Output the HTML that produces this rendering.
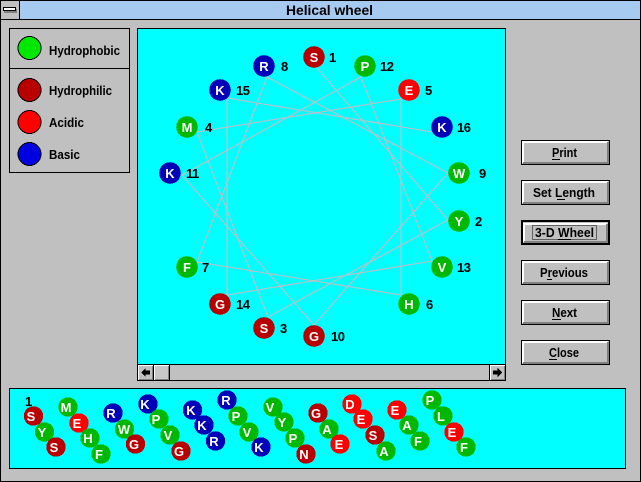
<!DOCTYPE html>
<html><head><meta charset="utf-8"><title>Helical wheel</title>
<style>
html,body{margin:0;padding:0;background:#c0c0c0;overflow:hidden}
svg{display:block}
text{font-family:"Liberation Sans",sans-serif;font-weight:bold}
rect,path,polyline,circle{shape-rendering:crispEdges}
.a text{fill:#fff;font-size:13px;text-anchor:middle}
.n text{fill:#000;font-size:13px;letter-spacing:-0.5px}
.l text{fill:#000;font-size:13px}
.b text{fill:#000;font-size:13px}
.g{fill:#00b800}.d{fill:#b80000}.r{fill:#ff0000}.u{fill:#0000b8}
</style></head><body>
<svg width="641" height="482" viewBox="0 0 641 482" xmlns="http://www.w3.org/2000/svg">
<rect width="641" height="482" fill="#c0c0c0"/>
<rect x="0.5" y="0.5" width="640" height="481" fill="none" stroke="#000"/>
<rect x="20" y="1" width="620" height="18" fill="#a6caf0"/>
<rect x="0" y="19" width="641" height="1" fill="#000"/>
<rect x="19" y="0" width="1" height="19" fill="#000"/>
<rect x="4" y="9" width="13" height="4" fill="#808080"/>
<rect x="3.5" y="7.5" width="12" height="3" fill="#fff" stroke="#000"/>
<text x="286" y="15" font-size="14" textLength="87" lengthAdjust="spacingAndGlyphs">Helical wheel</text>

<!-- legend -->
<rect x="9.5" y="28.5" width="120" height="144" fill="#c0c0c0" stroke="#000"/>
<rect x="9" y="68" width="121" height="1" fill="#000"/>
<g stroke="#000">
<circle cx="29.5" cy="48" r="11.5" fill="#00e800"/>
<circle cx="29.5" cy="90" r="11.5" fill="#b80000"/>
<circle cx="29.5" cy="122" r="11.5" fill="#ff0000"/>
<circle cx="29.5" cy="154" r="11.5" fill="#0000e0"/>
</g>
<g class="l">
<text x="49" y="55" textLength="71" lengthAdjust="spacingAndGlyphs">Hydrophobic</text>
<text x="49" y="95" textLength="63" lengthAdjust="spacingAndGlyphs">Hydrophilic</text>
<text x="49" y="127" textLength="35" lengthAdjust="spacingAndGlyphs">Acidic</text>
<text x="49" y="159" textLength="31" lengthAdjust="spacingAndGlyphs">Basic</text>
</g>

<!-- wheel panel -->
<rect x="137.5" y="28.5" width="368" height="352" fill="#c0c0c0" stroke="#000"/>
<rect x="138" y="29" width="367" height="335" fill="#00ffff"/>
<polyline fill="none" stroke="#d0b8c0" stroke-width="1" points="317,68 448,220 268,317 197,132 401,99 401,295 197,262 267,77 448,173 314,325 182,175 361,77 432,261 227,295 227,98 432,132"/>

<g class="a">
<circle cx="314" cy="57" r="10.8" class="d"/><text x="314" y="62">S</text>
<circle cx="365" cy="66" r="10.8" class="g"/><text x="365" y="71">P</text>
<circle cx="409" cy="90" r="10.8" class="r"/><text x="409" y="95">E</text>
<circle cx="442" cy="127" r="10.8" class="u"/><text x="442" y="132">K</text>
<circle cx="459" cy="173" r="10.8" class="g"/><text x="459" y="178">W</text>
<circle cx="459" cy="221" r="10.8" class="g"/><text x="459" y="226">Y</text>
<circle cx="442" cy="267" r="10.8" class="g"/><text x="442" y="272">V</text>
<circle cx="409" cy="304" r="10.8" class="g"/><text x="409" y="309">H</text>
<circle cx="314" cy="336" r="10.8" class="d"/><text x="314" y="341">G</text>
<circle cx="264" cy="328" r="10.8" class="d"/><text x="264" y="333">S</text>
<circle cx="220" cy="304" r="10.8" class="d"/><text x="220" y="309">G</text>
<circle cx="187" cy="267" r="10.8" class="g"/><text x="187" y="272">F</text>
<circle cx="170" cy="173" r="10.8" class="u"/><text x="170" y="178">K</text>
<circle cx="187" cy="127" r="10.8" class="g"/><text x="187" y="132">M</text>
<circle cx="220" cy="90" r="10.8" class="u"/><text x="220" y="95">K</text>
<circle cx="264" cy="66" r="10.8" class="u"/><text x="264" y="71">R</text>
</g>
<g class="n">
<text x="329" y="62">1</text>
<text x="380" y="71">12</text>
<text x="425" y="95">5</text>
<text x="457" y="132">16</text>
<text x="479" y="178">9</text>
<text x="475" y="226">2</text>
<text x="457" y="272">13</text>
<text x="426" y="309">6</text>
<text x="331" y="341">10</text>
<text x="280" y="333">3</text>
<text x="236" y="309">14</text>
<text x="202" y="272">7</text>
<text x="186" y="178">11</text>
<text x="205" y="132">4</text>
<text x="236" y="95">15</text>
<text x="281" y="71">8</text>
</g>

<!-- scrollbar -->
<rect x="137" y="364" width="369" height="1" fill="#000"/>
<rect x="138" y="365" width="15" height="15" fill="#c0c0c0"/>
<path d="M138.5 380V365.5H153" fill="none" stroke="#fff"/>
<path d="M139 379.5H152.5V366" fill="none" stroke="#808080"/>
<rect x="153" y="365" width="1" height="15" fill="#000"/>
<path d="M141 372.5L145.5 368V370.5H150V374.5H145.5V377Z" fill="#000"/>
<rect x="154" y="365" width="15" height="15" fill="#c8c8c8"/>
<path d="M154.5 380V365.5H169" fill="none" stroke="#fff"/>
<path d="M155 379.5H168.5V366" fill="none" stroke="#808080"/>
<rect x="169" y="365" width="1" height="15" fill="#000"/>
<rect x="489" y="365" width="1" height="15" fill="#000"/>
<rect x="490" y="365" width="15" height="15" fill="#c0c0c0"/>
<path d="M490.5 380V365.5H505" fill="none" stroke="#fff"/>
<path d="M491 379.5H504.5V366" fill="none" stroke="#808080"/>
<path d="M502 372.5L497.5 368V370.5H493V374.5H497.5V377Z" fill="#000"/>

<!-- buttons -->
<g fill="none">
<g><rect x="521.5" y="140.5" width="88" height="24" fill="#c0c0c0" stroke="#000"/>
<path d="M522 142H608M523 141V163" stroke="#fff" stroke-width="2"/>
<path d="M523 163H609M608 142V164" stroke="#808080" stroke-width="2"/></g>
<g><rect x="521.5" y="180.5" width="88" height="24" fill="#c0c0c0" stroke="#000"/>
<path d="M522 182H608M523 181V203" stroke="#fff" stroke-width="2"/>
<path d="M523 203H609M608 182V204" stroke="#808080" stroke-width="2"/></g>
<g><rect x="522" y="221" width="87" height="23" fill="#c0c0c0" stroke="#000" stroke-width="2"/>
<path d="M523 224H607M524 223V242" stroke="#fff" stroke-width="2"/>
<path d="M524 242H608M607 224V243" stroke="#808080" stroke-width="2"/>
<rect x="532.5" y="225.5" width="64" height="14" stroke="#000" stroke-dasharray="1 1"/></g>
<g><rect x="521.5" y="260.5" width="88" height="24" fill="#c0c0c0" stroke="#000"/>
<path d="M522 262H608M523 261V283" stroke="#fff" stroke-width="2"/>
<path d="M523 283H609M608 262V284" stroke="#808080" stroke-width="2"/></g>
<g><rect x="521.5" y="300.5" width="88" height="24" fill="#c0c0c0" stroke="#000"/>
<path d="M522 302H608M523 301V323" stroke="#fff" stroke-width="2"/>
<path d="M523 323H609M608 302V324" stroke="#808080" stroke-width="2"/></g>
<g><rect x="521.5" y="340.5" width="88" height="24" fill="#c0c0c0" stroke="#000"/>
<path d="M522 342H608M523 341V363" stroke="#fff" stroke-width="2"/>
<path d="M523 363H609M608 342V364" stroke="#808080" stroke-width="2"/></g>
</g>
<g class="b">
<text x="552" y="157" textLength="25" lengthAdjust="spacingAndGlyphs">Print</text>
<text x="533" y="197" textLength="62" lengthAdjust="spacingAndGlyphs">Set Length</text>
<text x="535" y="237" textLength="59" lengthAdjust="spacingAndGlyphs">3-D Wheel</text>
<text x="540" y="277" textLength="48" lengthAdjust="spacingAndGlyphs">Previous</text>
<text x="552" y="317" textLength="25" lengthAdjust="spacingAndGlyphs">Next</text>
<text x="549" y="357" textLength="30" lengthAdjust="spacingAndGlyphs">Close</text>
</g>
<g fill="#000">
<rect x="552" y="159" width="8" height="1"/>
<rect x="557" y="199" width="8" height="1"/>
<rect x="558" y="239" width="13" height="1"/>
<rect x="547" y="279" width="5" height="1"/>
<rect x="552" y="319" width="9" height="1"/>
<rect x="549" y="359" width="8" height="1"/>
</g>

<!-- bottom strip -->
<rect x="9.5" y="388.5" width="616" height="80" fill="#00ffff" stroke="#000"/>
<text x="25" y="406" font-size="13" fill="#000">1</text>
<g class="a">
<circle cx="33.5" cy="416" r="9.7" class="d"/><text x="31" y="421">S</text>
<circle cx="44.5" cy="432" r="9.7" class="g"/><text x="42" y="437">Y</text>
<circle cx="56" cy="447" r="9.7" class="d"/><text x="54" y="452">S</text>
<circle cx="68" cy="407" r="9.7" class="g"/><text x="66" y="412">M</text>
<circle cx="79" cy="423" r="9.7" class="r"/><text x="77" y="428">E</text>
<circle cx="90" cy="438" r="9.7" class="g"/><text x="88" y="443">H</text>
<circle cx="101" cy="454" r="9.7" class="g"/><text x="99" y="459">F</text>
<circle cx="113" cy="413" r="9.7" class="u"/><text x="111" y="418">R</text>
<circle cx="124.5" cy="429" r="9.7" class="g"/><text x="124" y="434">W</text>
<circle cx="135.5" cy="444" r="9.7" class="d"/><text x="134" y="449">G</text>
<circle cx="148" cy="404" r="9.7" class="u"/><text x="145" y="409">K</text>
<circle cx="159" cy="419" r="9.7" class="g"/><text x="156" y="424">P</text>
<circle cx="170" cy="435" r="9.7" class="g"/><text x="168" y="440">V</text>
<circle cx="181" cy="451" r="9.7" class="d"/><text x="179" y="456">G</text>
<circle cx="192.5" cy="410" r="9.7" class="u"/><text x="191" y="415">K</text>
<circle cx="204" cy="425" r="9.7" class="u"/><text x="202" y="430">K</text>
<circle cx="215.5" cy="441" r="9.7" class="u"/><text x="214" y="446">R</text>
<circle cx="227" cy="400" r="9.7" class="u"/><text x="226" y="405">R</text>
<circle cx="238" cy="416" r="9.7" class="g"/><text x="236" y="421">P</text>
<circle cx="249" cy="432" r="9.7" class="g"/><text x="247" y="437">V</text>
<circle cx="261" cy="447" r="9.7" class="u"/><text x="259" y="452">K</text>
<circle cx="273" cy="407" r="9.7" class="g"/><text x="270" y="412">V</text>
<circle cx="284" cy="422" r="9.7" class="g"/><text x="282" y="427">Y</text>
<circle cx="295" cy="438" r="9.7" class="g"/><text x="293" y="443">P</text>
<circle cx="306" cy="454" r="9.7" class="d"/><text x="304" y="459">N</text>
<circle cx="318" cy="413" r="9.7" class="d"/><text x="316" y="418">G</text>
<circle cx="329" cy="429" r="9.7" class="g"/><text x="327" y="434">A</text>
<circle cx="340" cy="444" r="9.7" class="r"/><text x="339" y="449">E</text>
<circle cx="352" cy="404" r="9.7" class="r"/><text x="350" y="409">D</text>
<circle cx="363" cy="419" r="9.7" class="r"/><text x="361" y="424">E</text>
<circle cx="375" cy="435" r="9.7" class="d"/><text x="373" y="440">S</text>
<circle cx="386" cy="451" r="9.7" class="g"/><text x="384" y="456">A</text>
<circle cx="397" cy="410" r="9.7" class="r"/><text x="395" y="415">E</text>
<circle cx="409" cy="425" r="9.7" class="g"/><text x="407" y="430">A</text>
<circle cx="420" cy="441" r="9.7" class="g"/><text x="418" y="446">F</text>
<circle cx="432" cy="400" r="9.7" class="g"/><text x="430" y="405">P</text>
<circle cx="443" cy="416" r="9.7" class="g"/><text x="441" y="421">L</text>
<circle cx="454" cy="432" r="9.7" class="r"/><text x="452" y="437">E</text>
<circle cx="466" cy="447" r="9.7" class="g"/><text x="464" y="452">F</text>
</g>
</svg>
</body></html>
